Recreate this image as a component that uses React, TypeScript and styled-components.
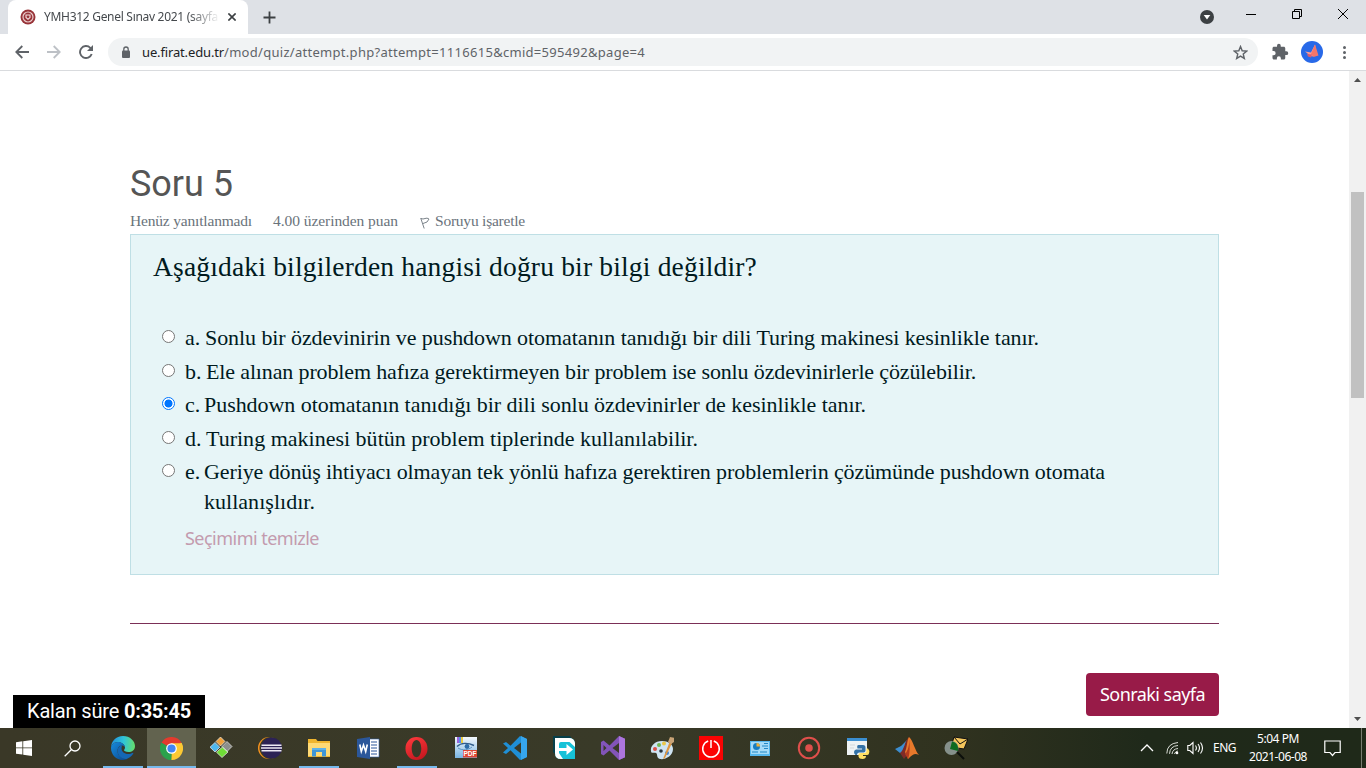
import React, { useLayoutEffect, useRef, useState } from "react";
import styled, { createGlobalStyle, css } from "styled-components";

const Global = createGlobalStyle`
  * { box-sizing: border-box; }
  html, body { margin: 0; padding: 0; overflow: hidden; background: #fff; }
`;

const ui = `"Segoe UI", "Noto Sans", sans-serif`;
const serif = `"Liberation Serif", serif`;

const Screen = styled.div`
  width: 1366px;
  height: 768px;
  display: flex;
  flex-direction: column;
  overflow: hidden;
`;

/* Text whose tracking is adjusted so that the line takes a given width. */
const Line = styled.span`
  display: inline-block;
  white-space: pre;
`;
function Fit({ width, children }: { width: number; children: string }) {
  const ref = useRef<HTMLSpanElement>(null);
  const [spacing, setSpacing] = useState(0);
  useLayoutEffect(() => {
    const natural = ref.current!.getBoundingClientRect().width;
    setSpacing((width - natural) / children.length);
  }, [width, children]);
  return <Line ref={ref} style={{ letterSpacing: spacing }}>{children}</Line>;
}

/* ---------- browser chrome ---------- */
const TabStrip = styled.div`
  height: 34px;
  flex: none;
  display: flex;
  background: #dee1e6;
  padding-left: 8px;
`;
const Tab = styled.div`
  width: 240px;
  height: 34px;
  display: flex;
  align-items: center;
  padding: 0 10px 0 12px;
  background: #fff;
  border-radius: 8px 8px 0 0;
  color: #45494d;
  font: 12px/16px ${ui};
`;
const TabTitle = styled.div`
  width: 174px;
  margin-left: 8px;
  overflow: hidden;
  mask-image: linear-gradient(90deg, #000 145px, transparent 176px);
`;
const TabClose = styled.div`
  display: flex;
  margin-left: 10px;
`;
const NewTab = styled.div`
  display: flex;
  align-items: center;
  margin-left: 15px;
`;
const WindowButtons = styled.div`
  margin-left: auto;
  display: flex;
  align-items: flex-start;
`;
const WindowButton = styled.div<{ $w: number; $top?: number }>`
  width: ${p => p.$w}px;
  padding-top: ${p => p.$top ?? 8}px;
  display: flex;
  justify-content: center;
`;
const Toolbar = styled.div`
  height: 37px;
  flex: none;
  display: flex;
  align-items: center;
  border-bottom: 1px solid #d9dbde;
  background: #fff;
  padding-left: 12px;
`;
const NavButton = styled.div`
  width: 20px;
  display: flex;
  justify-content: center;
  margin-right: 12px;
`;
const AddressBar = styled.div`
  width: 1150px;
  height: 28px;
  display: flex;
  align-items: center;
  border-radius: 14px;
  background: #f1f3f4;
  padding: 0 10px 0 13px;
  color: #5f6368;
  font: 13px/18px ${ui};
  & > svg:last-child { margin-left: auto; }
`;
const Url = styled.div`
  display: flex;
  margin-left: 11px;
`;
const Host = styled.span`
  color: #202124;
`;
const Extras = styled.div`
  display: flex;
  align-items: center;
  margin-left: 13px;
`;
const Avatar = styled.div`
  display: flex;
  margin: 0 20px 0 12px;
`;

/* ---------- page ---------- */
const Viewport = styled.div`
  height: 657px;
  flex: none;
  display: flex;
  background: #fff;
  position: relative;
`;
const Page = styled.main`
  width: 1349px;
  padding: 90px 130px 0;
  font-family: ${serif};
  color: #001a1e;
`;
const Heading = styled.h3`
  margin: 0;
  height: 46px;
  font: 400 36px/46px Roboto, sans-serif;
  color: #555;
`;
const Meta = styled.div`
  height: 27px;
  padding-top: 4px;
  display: flex;
  font-size: 15.5px;
  line-height: 20px;
  color: #6a737b;
`;
const MetaItem = styled.div<{ $gap?: number }>`
  display: flex;
  margin-left: ${p => p.$gap ?? 0}px;
  & > svg { margin: 6px 5px 0 0; }
`;
const Formulation = styled.section`
  width: 1089px;
  height: 341px;
  padding: 14px 22px 0;
  background: #e7f5f7;
  border: 1px solid #bfdfe5;
`;
const Question = styled.div`
  font-size: 27.5px;
  line-height: 36px;
`;
const Answers = styled.div`
  margin: 38px 0 0 8px;
  display: flex;
  flex-direction: column;
  gap: 3.5px;
`;
const Answer = styled.label`
  display: flex;
  align-items: flex-start;
  font-size: 22px;
  line-height: 30px;
`;
const Radio = styled.span<{ $on?: boolean }>`
  flex: none;
  width: 13px;
  height: 13px;
  margin: 7px 10px 0 1px;
  border-radius: 50%;
  border: 1px solid ${p => (p.$on ? "#0075ff" : "#767676")};
  background: ${p => (p.$on ? "radial-gradient(circle, #0075ff 3.6px, #fff 4.4px)" : "#fff")};
`;
const Letter = styled.span<{ $w: number }>`
  width: ${p => p.$w}px;
`;
const AnswerText = styled.span`
  display: flex;
  flex-direction: column;
  align-items: flex-start;
`;
const ClearLink = styled.a`
  display: block;
  margin: 6px 0 0 32px;
  font: 400 18px/30px "Noto Sans", sans-serif;
  color: #c39bae;
`;
const Divider = styled.div`
  width: 1089px;
  margin-top: 48px;
  border-top: 1px solid #7b2f57;
`;
const Actions = styled.div`
  width: 1089px;
  margin-top: 49px;
  display: flex;
  justify-content: flex-end;
`;
const NextButton = styled.button`
  width: 133px;
  height: 43px;
  padding: 0;
  border: 0;
  border-radius: 4px;
  background: #981b48;
  color: #fff;
  font: 18px/43px "Noto Sans", sans-serif;
`;
const Timer = styled.div`
  position: absolute;
  left: 13px;
  bottom: 0;
  width: 192px;
  height: 33px;
  padding-left: 14px;
  background: #000;
  color: #fff;
  font: 20px/33px Roboto, sans-serif;
  white-space: pre;
  & b { font-weight: 700; }
`;
const Scrollbar = styled.div`
  width: 17px;
  display: flex;
  flex-direction: column;
  align-items: center;
  background: #f1f1f1;
  padding: 7px 0 7px;
`;
const Thumb = styled.div`
  width: 13px;
  height: 206px;
  margin: 110px 0 auto;
  background: #c1c1c1;
`;

/* ---------- taskbar ---------- */
const Taskbar = styled.div`
  height: 40px;
  flex: none;
  display: flex;
  background: linear-gradient(90deg, #3a3827 0%, #393a28 45%, #30321f 70%, #1f291a 84%, #1f2919 100%);
`;
const Slot = styled.div<{ $w?: number; $state?: "open" | "active" }>`
  width: ${p => p.$w ?? 49}px;
  height: 40px;
  display: flex;
  align-items: center;
  justify-content: center;
  ${p => p.$state === "open" && css`
    background: linear-gradient(#76b9ed, #76b9ed) 50% 100% / 40px 2px no-repeat;
  `}
  ${p => p.$state === "active" && css`
    background: linear-gradient(#76b9ed, #76b9ed) 50% 100% / 100% 2px no-repeat, #62634f;
  `}
`;
const Tray = styled.div`
  margin-left: auto;
  width: 226px;
  display: flex;
  align-items: center;
  color: #fff;
  font: 12px/18px ${ui};
`;
const TrayItem = styled.div<{ $ml?: number }>`
  display: flex;
  margin-left: ${p => p.$ml ?? 0}px;
`;
const Clock = styled.div`
  width: 60px;
  margin-left: 12px;
  display: flex;
  flex-direction: column;
  align-items: center;
`;
const Peek = styled.div`
  width: 5px;
  height: 40px;
  margin-left: auto;
  border-left: 1px solid #777c70;
`;

/* ---------- drawings ---------- */
const Icon = ({ s = 24, children }: { s?: number; children: React.ReactNode }) => (
  <svg width={s} height={s} viewBox="0 0 24 24" fill="none">{children}</svg>
);

const Edge = () => (
  <Icon>
    <defs>
      <linearGradient id="edgeTop" x1="2" y1="8" x2="23" y2="10" gradientUnits="userSpaceOnUse"><stop stopColor="#2397dc" /><stop offset=".5" stopColor="#30c5d8" /><stop offset="1" stopColor="#62dc72" /></linearGradient>
      <linearGradient id="edgeBottom" x1="0" y1="9" x2="16" y2="22" gradientUnits="userSpaceOnUse"><stop stopColor="#1686d8" /><stop offset="1" stopColor="#0b4a91" /></linearGradient>
    </defs>
    <path d="M0 12C0 5 5 0 12 0s12 5 12 10c0 4-3 6-6.500 6-3 0-4.500-1-4.500-1.700 0-.6 1-1.200 1-2.800C14 8.500 10.500 6 7 6c-4 0-7 3-7 6Z" fill="url(#edgeTop)" />
    <path d="M0 12c0-3 3-6 7-6 3.500 0 7 2.500 7 5.500 0 0-1-2-3-2-3 0-4.500 3-4.500 5.500 0 4 4 8 9 8 1 0 1.500-.4 1.500-.4C16 23.400 14 24 12 24 5 24 0 18.500 0 12Z" fill="url(#edgeBottom)" />
    <path d="M11 9.500c-2.500 0-4.500 2.500-4.500 5.500 0 4 4 8.500 9 8 3-1 5.500-3 6.800-5.500.3-.7-.3-.8-.8-.5-1 .5-2.500 1-4.500 1-3.500 0-6.500-2.500-6.500-5.500 0-1.200.5-2.300.5-3Z" fill="#1467b5" />
  </Icon>
);
const Chrome = () => (
  <Icon s={23}>
    <path d="M12 12 1.600 6A12 12 0 0 1 22.400 6Z" fill="#e33b2e" />
    <path d="M12 12V24A12 12 0 0 1 1.600 6Z" fill="#2ba24c" />
    <path d="M12 12 22.400 6A12 12 0 0 1 12 24Z" fill="#fcc934" />
    <path d="M12 6.500h10.600L24 12 12 24l5-9Z" fill="#fcc934" />
    <path d="M1.600 6 7 15l5 3-.8 6C3 23-2 14 1.600 6Z" fill="#2ba24c" />
    <circle cx="12" cy="12" r="5.600" fill="#fff" /><circle cx="12" cy="12" r="4.300" fill="#4285f4" />
  </Icon>
);
const Diamonds = () => (
  <Icon>
    <path d="m11.500 1 4.500 4.500-4.500 4.500L7 5.500Z" fill="#f0a13b" /><path d="m6 6.500 4.800 4.700L6 16 1 11.200Z" fill="#4fb8ee" />
    <path d="m18 5.500 5 5-5 5-5-5Z" fill="#8d8f8c" /><path d="m13.500 11 5.500 5-6 5.500-5.500-5.300Z" fill="#6fdc36" />
    <path d="m11.500 1 4.500 4.500L11.500 10 7 5.500Zm-5.500 5.500 4.800 4.700L6 16l-5-4.800Zm12-1 5 5-5 5-5-5Zm-4.500 5.500 5.500 5-6 5.500-5.500-5.300Z" stroke="#eee" strokeWidth=".7" />
  </Icon>
);
const Eclipse = () => (
  <Icon>
    <circle cx="11" cy="12" r="11" fill="#f7941e" /><circle cx="12.500" cy="12" r="11" fill="#383928" /><circle cx="13.500" cy="12" r="10.500" fill="#2c2255" />
    <path d="M3.500 9.200h20M3 12h21M3.500 14.800h20" stroke="#eeeaf5" strokeWidth="1.600" />
  </Icon>
);
const Explorer = () => (
  <Icon>
    <path d="M1 3h8l1.500 2H23v16H1Z" fill="#f0b52e" /><path d="M1 7h22v13H1Z" fill="#ffda75" /><path d="M5 20.500V12h14v8.500h-4V16H9v4.500Z" fill="#3f96d6" /><path d="M5 12h14v2H5Z" fill="#5fb2e8" />
  </Icon>
);
const Word = () => (
  <Icon>
    <path d="M12 3h11v18H12Z" fill="#fff" stroke="#3462a8" strokeWidth=".6" /><path d="M15 6h6M15 9h6M15 12h6M15 15h6M15 18h6" stroke="#2b579a" strokeWidth="1.100" />
    <path d="m1 3 13-2v22L1 21Z" fill="#2b579a" /><path d="m3.800 8.500 1.500 7 2.200-6.500 2.200 6.500 1.600-7" stroke="#fff" strokeWidth="1.600" />
  </Icon>
);
const Opera = () => (
  <Icon s={23}>
    <defs><linearGradient id="opera" x1="4" y1="0" x2="18" y2="24" gradientUnits="userSpaceOnUse"><stop stopColor="#ff3a3d" /><stop offset="1" stopColor="#c3161e" /></linearGradient></defs>
    <path fillRule="evenodd" d="M12 0c6.500 0 11.500 5 11.500 12S18.500 24 12 24 .5 19 .5 12 5.500 0 12 0Zm0 3C9 3 7 7 7 12s2 9 5 9 5-4 5-9-2-9-5-9Z" fill="url(#opera)" />
  </Icon>
);
const PdfViewer = () => (
  <Icon>
    <defs><linearGradient id="pdf" x2="0" y2="1"><stop stopColor="#f3f8fc" /><stop offset="1" stopColor="#79b5e3" /></linearGradient></defs>
    <path d="M1 1h22v21H1Z" fill="url(#pdf)" /><path d="M3 1h2v6H3Z" fill="#9a66dd" /><path d="M5 1h2v6H5Z" fill="#5692ef" /><path d="M7 1h2v6H7Z" fill="#edcc42" />
    <path d="M3 10.500c4-4 11-4 17-1" stroke="#315c8a" strokeWidth="1.400" /><path d="M4 12c5 3 10 2 14-1" stroke="#5c93c4" /><circle cx="13" cy="10.500" r="2.400" fill="#2c6ca8" />
    <rect x="9" y="14" width="14" height="7.500" fill="#df4635" />
    <text x="9.500" y="20.300" fontFamily="Liberation Sans" fontSize="6.500" fontWeight="700" fill="#fff">PDF</text>
  </Icon>
);
const VsCode = () => (
  <Icon>
    <path d="M17 0 24 3v18l-7 3L7.500 14.300 3 18l-3-1.500L5 12 0 7.500 3 6l4.500 3.700ZM18 6.500 11 12l7 5.500Z" fill="#1f8fd6" fillRule="evenodd" /><path d="m18 0 6 3v18l-6 3Z" fill="#36a6ee" />
  </Icon>
);
const ShareArrow = () => (
  <Icon>
    <path d="M1 0h17l3 4v3L5 20l-4-4Z" fill="#073f4a" />
    <path d="M3 2h14q6 0 6 6v15H9q-6 0-6-6Z" fill="#16c2d8" />
    <path d="M3 2h14q5 0 6 5v4l-5.500-5H9q-2 0-2 2v9l4 6H9q-6 0-6-6Z" fill="#fff" />
    <path d="M5 12h9.500V8l6.500 5.500-6.500 5.500v-4H5Z" fill="#fff" />
  </Icon>
);
const VisualStudio = () => (
  <Icon>
    <path fillRule="evenodd" d="m0 6 2.500-1.500 6 5L18 0l6 2.800v18.400L18 24l-9.500-9.500-6 5L0 18Zm2.500 3v6L5.500 12ZM18 7l-6.500 5L18 17Z" fill="#8254b9" /><path d="m18 0 6 2.800v18.400L18 24Z" fill="#ad75de" />
  </Icon>
);
const Paint = () => (
  <Icon>
    <path d="M12 5C5 5 0 10 1 15c0 3 3 1 5 2s0 5 4 6c5 1 13-3 13-10 0-5-5-8-11-8Z" fill="#cfe4f2" /><circle cx="5" cy="13" r="2" fill="#db5148" /><circle cx="9" cy="9" r="2" fill="#72b957" /><circle cx="14" cy="7.500" r="2" fill="#ecc748" /><circle cx="11" cy="15" r="1.800" fill="#28343d" /><circle cx="17" cy="17" r="2" fill="#4285d4" />
    <path d="m20 5-7 18 2-1 7-15Z" fill="#df9740" /><path d="m18 6 2-5 5 1-1 4-3 2Z" fill="#c8a377" />
  </Icon>
);
const Power = () => (
  <Icon><path d="M0 0h24v24H0Z" fill="#fb0303" /><path d="M9.200 5a8.300 8.300 0 1 0 5.600 0M12 4v8" stroke="#fff" strokeWidth="1.500" /></Icon>
);
const ControlPanel = () => (
  <Icon><path d="M2 5h20v15H2Z" fill="#55b7ee" /><path d="M3 6h18v12H3Z" fill="#a5dbf8" /><circle cx="8.500" cy="10.500" r="3.500" fill="#167dc1" /><path d="M8.500 10.500V7A3.500 3.500 0 0 1 12 10.500Z" fill="#f0b23b" /><path d="M16 7.500h4M16 10h4M16 12.500h4M14 10h2M4 16h6M12 16h7" stroke="#2188c5" strokeWidth="1.200" /></Icon>
);
const Record = () => (
  <Icon><circle cx="12" cy="12" r="10.200" stroke="#df4f4b" strokeWidth="2" /><circle cx="12" cy="12" r="3.800" fill="#df4f4b" /></Icon>
);
const Python = () => (
  <Icon>
    <path d="M1 2h20v17H1Z" fill="#eef2f4" /><path d="M1 2h20v3H1Z" fill="#3b8fd2" /><path d="M4 9h5M4 12h4" stroke="#d4d8db" />
    <path d="M12.500 9h4.500q2.500 0 2.500 2.500v3q0 2-2 2h-4q-2.500 0-2.500 2.500H9.500q-1.500-1-1.500-3t2-2.500h6v-1h-4.500q-1-3.500 1-3.500Z" fill="#3372a7" /><path d="M20.500 12.500h1.500q2 2 1 5-.5 1.500-2 1.500h-4v1h3q0 3-3.500 3t-4-2.500v-2q0-1.500 2.500-1.500h3.500q2 0 2-2Z" fill="#ffdf63" />
  </Icon>
);
const Matlab = () => (
  <Icon>
    <path d="m0 13 6-3 6-6-4 12-3 1Z" fill="#3c8ed0" /><path d="M5 17c4-2 5-13 9-16l-1 17-4 5Z" fill="#7d2b27" /><path d="M14 1c4 3 6 14 10 18-4-2-6-1-11 4l-3-7c2-4 2-12 4-15Z" fill="#e7792b" /><path d="M14 1c1 7-1 14-4 17l3 5c2-5 2-13 1-22Z" fill="#b33a1e" />
  </Icon>
);
const MailSearch = () => (
  <Icon>
    <path d="m10 1 14 2-4 10-13-2Z" fill="#f4c65c" stroke="#111" /><path d="m10 1 6 7 8-5" stroke="#111" /><circle cx="7.500" cy="12" r="7" fill="#85908b" /><path d="M8 5.500q7 1 6 9.500l-8-2Z" fill="#0d6b20" /><path d="m13 16 7 7" stroke="#0b0f0b" strokeWidth="2" />
  </Icon>
);
const Start = () => <svg width="16" height="16" viewBox="0 0 16 16" fill="#fff"><path d="m0 2.200 6.400-.9v6.200H0ZM7.200 1.200 16 0v7.500H7.200ZM0 8.300h6.400v6.300L0 13.700Zm7.200 0H16V16l-8.800-1.200Z" /></svg>;
const Search = () => <svg width="17" height="17" viewBox="0 0 17 17" fill="none" stroke="#fff" strokeWidth="1.300"><circle cx="11" cy="6" r="5" /><path d="M7.500 9.500.7 16.300" /></svg>;

const apps: [React.FC, ("open" | "active")?][] = [
  [Edge, "open"], [Chrome, "active"], [Diamonds], [Eclipse], [Explorer, "open"], [Word], [Opera, "open"],
  [PdfViewer], [VsCode], [ShareArrow], [VisualStudio], [Paint], [Power], [ControlPanel], [Record], [Python], [Matlab], [MailSearch],
];

const answers = [
  { l: "a.", lw: 20, lines: [["Sonlu bir özdevinirin ve pushdown otomatanın tanıdığı bir dili Turing makinesi kesinlikle tanır.", 834]] },
  { l: "b.", lw: 21, lines: [["Ele alınan problem hafıza gerektirmeyen bir problem ise sonlu özdevinirlerle çözülebilir.", 770]] },
  { l: "c.", lw: 19, on: true, lines: [["Pushdown otomatanın tanıdığı bir dili sonlu özdevinirler de kesinlikle tanır.", 662]] },
  { l: "d.", lw: 21, lines: [["Turing makinesi bütün problem tiplerinde kullanılabilir.", 492]] },
  { l: "e.", lw: 19, lines: [["Geriye dönüş ihtiyacı olmayan tek yönlü hafıza gerektiren problemlerin çözümünde pushdown otomata", 901], ["kullanışlıdır.", 111]] },
] as { l: string; lw: number; on?: boolean; lines: [string, number][] }[];

export default function App() {
  return (
    <Screen>
      <Global />
      <TabStrip>
        <Tab>
          <svg width="16" height="16" viewBox="0 0 16 16" fill="none"><circle cx="8" cy="8" r="7.500" fill="#983338" /><circle cx="8" cy="8" r="5" stroke="#e9cccc" strokeWidth="1.200" /><path d="M6 6h4v2.500L8 10.300 6 8.500Z" stroke="#f4dede" strokeWidth="1.100" /></svg>
          <TabTitle><Fit width={174}>YMH312 Genel Sınav 2021 (sayfa</Fit></TabTitle>
          <TabClose><svg width="8" height="8" viewBox="0 0 8 8" stroke="#3c4043" strokeWidth="1.600"><path d="m.4.4 7.200 7.200m0-7.200L.4 7.600" /></svg></TabClose>
        </Tab>
        <NewTab><svg width="13" height="13" viewBox="0 0 13 13" stroke="#3c4043" strokeWidth="1.800"><path d="M6.500.5v12M.5 6.500h12" /></svg></NewTab>
        <WindowButtons>
          <WindowButton $w={42} $top={10}><svg width="14" height="14" viewBox="0 0 14 14"><circle cx="7" cy="7" r="7" fill="#3c4043" /><path d="M3.700 5h6.600L7 9.500Z" fill="#fff" /></svg></WindowButton>
          <WindowButton $w={46} $top={14}><svg width="10" height="1"><path d="M0 .5h10" stroke="#000" /></svg></WindowButton>
          <WindowButton $w={46} $top={9}><svg width="10" height="10" viewBox="0 0 10 10" fill="none" stroke="#000"><path d="M.5 2.500h7v7h-7ZM2.500 2.500v-2h7v7h-2" /></svg></WindowButton>
          <WindowButton $w={46} $top={9}><svg width="10" height="10" viewBox="0 0 10 10" stroke="#000"><path d="m0 0 10 10M10 0 0 10" /></svg></WindowButton>
        </WindowButtons>
      </TabStrip>
      <Toolbar>
        <NavButton><svg width="14" height="14" viewBox="0 0 14 14" fill="none" stroke="#5f6368" strokeWidth="1.800"><path d="M14 7H1.500M7.300 1 1.300 7l6 6" /></svg></NavButton>
        <NavButton><svg width="14" height="14" viewBox="0 0 14 14" fill="none" stroke="#bdc1c6" strokeWidth="1.800"><path d="M0 7h12.500M6.700 1l6 6-6 6" /></svg></NavButton>
        <NavButton><svg width="14" height="14" viewBox="0 0 14 14" fill="none"><path d="M12.700 9A6 6 0 1 1 11.300 2.800L12.500 4.300" stroke="#5f6368" strokeWidth="1.900" /><path d="M14 0v6H8Z" fill="#5f6368" /></svg></NavButton>
        <AddressBar>
          <svg width="10" height="13" viewBox="0 0 10 13" fill="none"><rect x="1" y="4.500" width="8" height="7.500" rx="1" fill="#5f6368" /><path d="M2.800 5V3.200a2.200 2.200 0 0 1 4.400 0V5" stroke="#5f6368" strokeWidth="1.300" /></svg>
          <Url><Host><Fit width={82}>ue.firat.edu.tr</Fit></Host><Fit width={421}>/mod/quiz/attempt.php?attempt=1116615&cmid=595492&page=4</Fit></Url>
          <svg width="15" height="15" viewBox="0 0 24 24" fill="none" stroke="#5f6368" strokeWidth="2.300"><path d="m12 2.500 2.700 6.700 7.300.6-5.600 4.700 1.700 7-6.100-3.800-6.100 3.800 1.700-7L2 9.800l7.300-.6Z" /></svg>
        </AddressBar>
        <Extras>
          <svg width="18" height="18" viewBox="0 0 24 24" fill="#5f6368"><path d="M20.500 11H19V7c0-1.100-.9-2-2-2h-4V3.500a2.500 2.500 0 0 0-5 0V5H4c-1.100 0-2 .9-2 2v3.800h1.500a2.700 2.700 0 0 1 0 5.400H2V20c0 1.100.9 2 2 2h3.800v-1.500a2.700 2.700 0 0 1 5.400 0V22H17c1.100 0 2-.9 2-2v-4h1.500a2.500 2.500 0 0 0 0-5Z" /></svg>
          <Avatar><svg width="22" height="22" viewBox="0 0 22 22"><circle cx="11" cy="11" r="11" fill="#2869e8" /><path d="m14 3.500-4 8-6-1 5 4 2 1 5-2Z" fill="#ff9c91" /><path d="m14 3.500 3.500 11-5 1.500-2.500-3Z" fill="#f4766a" /><path d="m6 13 5 .5-1 3-3-1Z" fill="#d95c72" /></svg></Avatar>
          <svg width="3" height="13" viewBox="0 0 3 13" fill="#5f6368"><circle cx="1.500" cy="1.500" r="1.500" /><circle cx="1.500" cy="6.500" r="1.500" /><circle cx="1.500" cy="11.500" r="1.500" /></svg>
        </Extras>
      </Toolbar>
      <Viewport>
        <Page>
          <Heading><Fit width={103}>Soru 5</Fit></Heading>
          <Meta>
            <MetaItem><Fit width={122}>Henüz yanıtlanmadı</Fit></MetaItem>
            <MetaItem $gap={21}><Fit width={125}>4.00 üzerinden puan</Fit></MetaItem>
            <MetaItem $gap={22}>
              <svg width="10" height="12" viewBox="0 0 10 12" fill="none" stroke="#7c848b"><path d="m.7 1 3.500 10.500M1 1.500q2 1 4 0t4 .5L7 5l-4 1.500" /></svg>
              <Fit width={90}>Soruyu işaretle</Fit>
            </MetaItem>
          </Meta>
          <Formulation>
            <Question><Fit width={604}>Aşağıdaki bilgilerden hangisi doğru bir bilgi değildir?</Fit></Question>
            <Answers>
              {answers.map(a => (
                <Answer key={a.l}>
                  <Radio $on={a.on} />
                  <Letter $w={a.lw}>{a.l}</Letter>
                  <AnswerText>{a.lines.map(([t, w]) => <Fit key={t} width={w}>{t}</Fit>)}</AnswerText>
                </Answer>
              ))}
            </Answers>
            <ClearLink><Fit width={134}>Seçimimi temizle</Fit></ClearLink>
          </Formulation>
          <Divider />
          <Actions><NextButton><Fit width={105}>Sonraki sayfa</Fit></NextButton></Actions>
        </Page>
        <Scrollbar>
          <svg width="7" height="4"><path d="M0 4 3.500 0 7 4Z" fill="#505050" /></svg>
          <Thumb />
          <svg width="7" height="4"><path d="M0 0h7L3.500 4Z" fill="#505050" /></svg>
        </Scrollbar>
        <Timer><Fit width={97}>Kalan süre </Fit><b><Fit width={67}>0:35:45</Fit></b></Timer>
      </Viewport>
      <Taskbar>
        <Slot $w={48}><Start /></Slot>
        <Slot $w={48}><Search /></Slot>
        <Slot $w={2} />
        {apps.map(([App, state], i) => <Slot key={i} $state={state}><App /></Slot>)}
        <Tray>
          <TrayItem><svg width="14" height="8" viewBox="0 0 14 8" fill="none" stroke="#fff" strokeWidth="1.300"><path d="m1 7 6-6 6 6" /></svg></TrayItem>
          <TrayItem $ml={12}><svg width="13" height="14" viewBox="0 0 13 14" fill="none" stroke="#d9ddd6"><path d="M.8 12.500Q1 2.500 12 1.500M3.500 12.800Q4 5 12 4.500M6 13q.5-5 6-5.500M8.500 13q.5-2.500 3.500-3" /><circle cx="11" cy="12" r="1.300" fill="#fff" stroke="none" /></svg></TrayItem>
          <TrayItem $ml={8}><svg width="17" height="14" viewBox="0 0 17 14" fill="none" stroke="#fff" strokeWidth="1.100"><path d="M.8 4.500h2L6 1.500v11l-3.200-3h-2ZM8.500 4.500q1.800 2.500 0 5M11 3q3 4 0 8M13.500 1.500q4 5.500 0 11" /></svg></TrayItem>
          <TrayItem $ml={9}><Fit width={23}>ENG</Fit></TrayItem>
          <Clock><Fit width={42}>5:04 PM</Fit><Fit width={58}>2021-06-08</Fit></Clock>
          <TrayItem $ml={16}><svg width="17" height="17" viewBox="0 0 17 17" fill="none" stroke="#fff" strokeWidth="1.200"><path d="M.8 1h15.400v11.500H11l-2.500 3-2.500-3H.8Z" /></svg></TrayItem>
          <Peek />
        </Tray>
      </Taskbar>
    </Screen>
  );
}
